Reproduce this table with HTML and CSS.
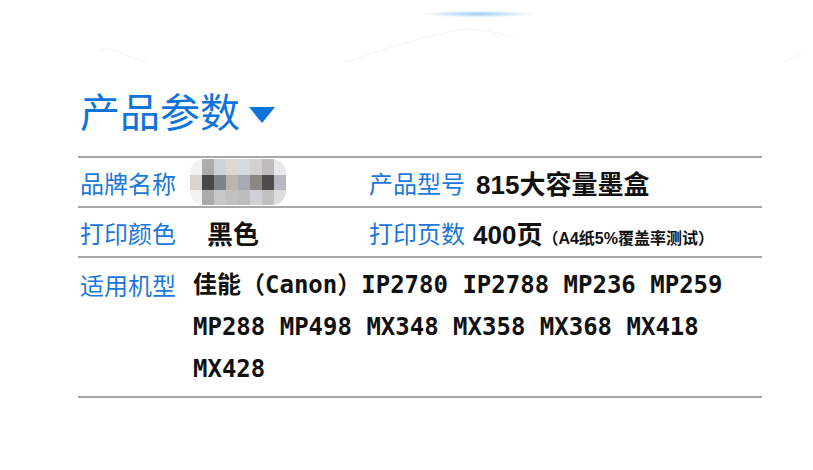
FILE: index.html
```html
<!DOCTYPE html>
<html lang="zh-CN">
<head>
  <meta charset="UTF-8">
  <title>产品参数</title>
  <link rel="stylesheet" href="styles.css">
</head>
<body>
  <div class="deco">
    <svg width="813" height="70" viewBox="0 0 813 70">
      <defs>
        <radialGradient id="glow" cx="50%" cy="50%" r="50%">
          <stop offset="0" stop-color="#8cc2f5" stop-opacity="0.9"/>
          <stop offset="0.6" stop-color="#c4e0fa" stop-opacity="0.5"/>
          <stop offset="1" stop-color="#ffffff" stop-opacity="0"/>
        </radialGradient>
      </defs>
      <ellipse cx="478" cy="14" rx="66" ry="4" fill="url(#glow)"/>
      <path d="M98 52 Q104 47 112 50 L146 62" stroke="#f3f3f3" stroke-width="1" fill="none"/>
      <path d="M346 62 Q420 36 466 29 Q490 30 518 38" stroke="#f4f4f4" stroke-width="1" fill="none"/>
      <path d="M784 62 L802 54" stroke="#f4f4f4" stroke-width="1" fill="none"/>
    </svg>
  </div>

  <h2 class="section-title">产品参数 <span class="arrow"></span></h2>

  <div class="params">
    <div class="row">
      <div class="label">品牌名称</div>
      <div class="value">
        <svg class="mosaic" width="96" height="46" viewBox="0 0 96 46">
          <defs>
            <clipPath id="pill"><rect x="0" y="0" width="96" height="46" rx="14"/></clipPath>
            <filter id="soft"><feGaussianBlur stdDeviation="0.6"/></filter>
          </defs>
          <g clip-path="url(#pill)" filter="url(#soft)">
            <rect x="0" y="0" width="96" height="46" fill="#f2f2f2"/>
            <rect x="12" y="0" width="12" height="16" fill="#acacab"/>
            <rect x="24" y="0" width="12" height="16" fill="#cfd2d6"/>
            <rect x="36" y="0" width="12" height="16" fill="#dcd9d5"/>
            <rect x="48" y="0" width="12" height="16" fill="#d7dbdf"/>
            <rect x="60" y="0" width="12" height="16" fill="#d3d1cf"/>
            <rect x="72" y="0" width="12" height="16" fill="#bebcba"/>
            <rect x="84" y="0" width="12" height="16" fill="#e9e9eb"/>
            <rect x="0" y="16" width="12" height="15" fill="#d9d4d0"/>
            <rect x="12" y="16" width="12" height="15" fill="#4a4948"/>
            <rect x="24" y="16" width="12" height="15" fill="#7f848c"/>
            <rect x="36" y="16" width="12" height="15" fill="#b9b5b1"/>
            <rect x="48" y="16" width="12" height="15" fill="#a7abb1"/>
            <rect x="60" y="16" width="12" height="15" fill="#8b8783"/>
            <rect x="72" y="16" width="12" height="15" fill="#4f4d4b"/>
            <rect x="84" y="16" width="12" height="15" fill="#b5b9bf"/>
            <rect x="12" y="31" width="12" height="15" fill="#aaaaaa"/>
            <rect x="24" y="31" width="12" height="15" fill="#c5c7c9"/>
            <rect x="36" y="31" width="12" height="15" fill="#c3c1bf"/>
            <rect x="48" y="31" width="12" height="15" fill="#bdbdbd"/>
            <rect x="60" y="31" width="12" height="15" fill="#d1d1d5"/>
            <rect x="72" y="31" width="12" height="15" fill="#c1c1c1"/>
            <rect x="84" y="31" width="12" height="15" fill="#dddddd"/>
          </g>
        </svg>
      </div>
      <div class="label">产品型号</div>
      <div class="value">815大容量墨盒</div>
    </div>

    <div class="row">
      <div class="label">打印颜色</div>
      <div class="value indent">黑色</div>
      <div class="label">打印页数</div>
      <div class="value pages">400页<span class="note">（A4纸5%覆盖率测试）</span></div>
    </div>

    <div class="row models">
      <div class="label">适用机型</div>
      <div class="model-list">佳能（Canon）IP2780 IP2788 MP236 MP259 MP288 MP498 MX348 MX358 MX368 MX418 MX428</div>
    </div>
  </div>
</body>
</html>
```

FILE: styles.css
```css
body {
  margin: 0;
  background: #ffffff;
  font-family: "Noto Sans CJK SC", "Noto Sans", sans-serif;
  color: #111;
}
.deco {
  height: 70px;
  overflow: hidden;
}
.deco svg {
  display: block;
}
.section-title {
  margin: 0 0 0 80px;
  height: 86px;
  font-size: 40px;
  font-weight: 400;
  line-height: 80px;
  color: #0d74de;
}
.arrow {
  display: inline-block;
  width: 0;
  height: 0;
  margin-left: 0;
  border-left: 13px solid transparent;
  border-right: 13px solid transparent;
  border-top: 16px solid #0d74de;
  vertical-align: 4px;
}
.params {
  margin: 0 51px 0 78px;
  border-top: 2px solid #a8a8a8;
}
.row {
  display: grid;
  grid-template-columns: 112px 177px 109px 1fr;
  align-items: center;
  height: 48px;
  border-bottom: 2px solid #a8a8a8;
}
.label {
  padding-left: 2px;
  font-size: 24px;
  color: #1a78dc;
  white-space: nowrap;
}
.value {
  font-family: "Liberation Sans", "Noto Sans CJK SC", sans-serif;
  font-size: 26px;
  font-weight: bold;
  white-space: nowrap;
}
.value.indent {
  padding-left: 17px;
}
.value.pages {
  margin-left: -3px;
}
.mosaic {
  display: block;
}
.note {
  font-size: 16px;
}
.row.models {
  grid-template-columns: 115px 1fr;
  align-items: start;
  height: auto;
  padding: 6px 0;
}
.row.models .label {
  line-height: 42px;
}
.model-list {
  font-family: "DejaVu Sans Mono", "Noto Sans CJK SC", monospace;
  font-size: 24px;
  font-weight: bold;
  line-height: 42px;
}
```
